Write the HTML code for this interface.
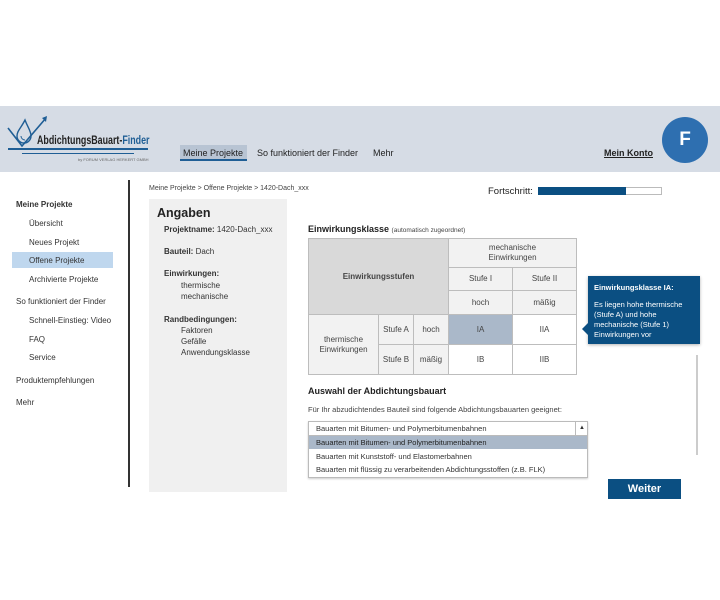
<!DOCTYPE html>
<html><head><meta charset="utf-8"><style>
*{margin:0;padding:0;box-sizing:border-box}
body{width:720px;height:600px;background:#fff;font-family:"Liberation Sans",sans-serif;color:#333;position:relative;overflow:hidden;font-size:8px}
.a{position:absolute;white-space:nowrap}
table{border-collapse:collapse;position:absolute;left:308px;top:238px}
td{border:1px solid #bdbdbd;text-align:center;font-size:8px;color:#444;line-height:10px}
</style></head><body>
<div class="a" style="left:0;top:106px;width:720px;height:66px;background:#d6dce5"></div>
<svg class="a" style="left:6px;top:114px" width="46" height="36" viewBox="0 0 46 36">
<path d="M2 14 L16 32 L40 4" fill="none" stroke="#1f5e95" stroke-width="1.6"/>
<path d="M36 4 L41 2 L40 8 Z" fill="#1f5e95"/>
<path d="M19 6 C15 14 11 17 11 22 a7 7 0 0 0 14 0 C25 17 22 14 19 6Z" fill="none" stroke="#1f5e95" stroke-width="1.4"/>
<path d="M15 22 a4 4 0 0 0 4 4" fill="none" stroke="#1f5e95" stroke-width="1"/>
</svg>
<div class="a" style="left:37px;top:133px;font-size:12px;font-weight:bold;color:#222;transform:scaleX(0.74);transform-origin:left">AbdichtungsBauart-<span style="color:#1f5e95">Finder</span></div>
<div class="a" style="left:8px;top:148px;width:140px;height:1.5px;background:#1f5e95"></div>
<div class="a" style="left:22px;top:153px;width:112px;height:1px;background:#1f5e95"></div>
<div class="a" style="left:78px;top:157px;font-size:4px;color:#666">by FORUM VERLAG HERKERT GMBH</div>
<div class="a" style="left:180px;top:145px;width:67px;height:16px;background:#b8c4d3;border-bottom:2px solid #1f5e95"></div>
<div class="a" style="left:183px;top:148px;font-size:9px;color:#222">Meine Projekte</div>
<div class="a" style="left:257px;top:148px;font-size:9px;color:#222">So funktioniert der Finder</div>
<div class="a" style="left:373px;top:148px;font-size:9px;color:#222">Mehr</div>
<div class="a" style="left:604px;top:148px;font-size:9px;font-weight:bold;color:#222;text-decoration:underline">Mein Konto</div>
<div class="a" style="left:662px;top:117px;width:46px;height:46px;border-radius:50%;background:#2e6fb0;color:#fff;font-size:19px;font-weight:bold;text-align:center;line-height:46px">F</div>

<div class="a" style="left:16px;top:200px;font-size:8px;font-weight:bold">Meine Projekte</div>
<div class="a" style="left:29px;top:219px">Übersicht</div>
<div class="a" style="left:29px;top:238px">Neues Projekt</div>
<div class="a" style="left:12px;top:252px;width:101px;height:16px;background:#bfd7ee"></div>
<div class="a" style="left:29px;top:256px">Offene Projekte</div>
<div class="a" style="left:29px;top:275px">Archivierte Projekte</div>
<div class="a" style="left:16px;top:297px">So funktioniert der Finder</div>
<div class="a" style="left:29px;top:316px">Schnell-Einstieg: Video</div>
<div class="a" style="left:29px;top:335px">FAQ</div>
<div class="a" style="left:29px;top:353px">Service</div>
<div class="a" style="left:16px;top:376px">Produktempfehlungen</div>
<div class="a" style="left:16px;top:398px">Mehr</div>
<div class="a" style="left:128px;top:180px;width:2px;height:307px;background:#333"></div>

<div class="a" style="left:149px;top:185px;font-size:7px;color:#444">Meine Projekte &gt; Offene Projekte &gt; 1420-Dach_xxx</div>
<div class="a" style="left:149px;top:199px;width:138px;height:293px;background:#f0f0f0"></div>
<div class="a" style="left:157px;top:206px;font-size:12.5px;font-weight:bold;color:#222">Angaben</div>
<div class="a" style="left:164px;top:225px"><b>Projektname:</b> 1420-Dach_xxx</div>
<div class="a" style="left:164px;top:247px"><b>Bauteil:</b> Dach</div>
<div class="a" style="left:164px;top:269px"><b>Einwirkungen:</b></div>
<div class="a" style="left:181px;top:281px">thermische</div>
<div class="a" style="left:181px;top:292px">mechanische</div>
<div class="a" style="left:164px;top:315px"><b>Randbedingungen:</b></div>
<div class="a" style="left:181px;top:326px">Faktoren</div>
<div class="a" style="left:181px;top:337px">Gefälle</div>
<div class="a" style="left:181px;top:348px">Anwendungsklasse</div>

<div class="a" style="left:488px;top:186px;font-size:9.5px;color:#222">Fortschritt:</div>
<div class="a" style="left:538px;top:187px;width:124px;height:8px;border:1px solid #bbb;background:#fff"></div>
<div class="a" style="left:538px;top:187px;width:88px;height:8px;background:#0b4f82"></div>

<div class="a" style="left:308px;top:224px;font-size:9px;font-weight:bold;color:#222">Einwirkungsklasse <span style="font-weight:normal;font-size:6.5px;color:#444">(automatisch zugeordnet)</span></div>
<table>
<tr style="height:29px"><td colspan="3" rowspan="3" style="width:140px;background:#d9d9d9;font-weight:bold">Einwirkungsstufen</td><td colspan="2" style="background:#f2f2f2">mechanische<br>Einwirkungen</td></tr>
<tr style="height:23px"><td style="width:64px;background:#f2f2f2">Stufe I</td><td style="width:64px;background:#f2f2f2">Stufe II</td></tr>
<tr style="height:24px"><td style="background:#f2f2f2">hoch</td><td style="background:#f2f2f2">mäßig</td></tr>
<tr style="height:30px"><td rowspan="2" style="width:70px;background:#f2f2f2">thermische<br>Einwirkungen</td><td style="width:35px;background:#f2f2f2">Stufe A</td><td style="width:35px;background:#f2f2f2">hoch</td><td style="background:#aab8c9">IA</td><td>IIA</td></tr>
<tr style="height:30px"><td style="background:#f2f2f2">Stufe B</td><td style="background:#f2f2f2">mäßig</td><td>IB</td><td>IIB</td></tr>
</table>
<div class="a" style="left:588px;top:276px;width:112px;height:68px;background:#0b4f82;box-shadow:0 1px 3px rgba(0,0,0,.3)"></div>
<div class="a" style="left:582px;top:323px;width:0;height:0;border-top:6px solid transparent;border-bottom:6px solid transparent;border-right:6px solid #0b4f82"></div>
<div class="a" style="left:594px;top:283px;color:#fff;font-weight:bold;font-size:7.5px">Einwirkungsklasse IA:</div>
<div class="a" style="left:594px;top:300px;color:#fff;font-size:7.5px;line-height:10px">Es liegen hohe thermische<br>(Stufe A) und hohe<br>mechanische (Stufe 1)<br>Einwirkungen vor</div>
<div class="a" style="left:696px;top:355px;width:2px;height:100px;background:#ccc"></div>

<div class="a" style="left:308px;top:386px;font-size:9px;font-weight:bold;color:#222">Auswahl der Abdichtungsbauart</div>
<div class="a" style="left:308px;top:405px;font-size:7.5px;color:#444">Für Ihr abzudichtendes Bauteil sind folgende Abdichtungsbauarten geeignet:</div>
<div class="a" style="left:308px;top:421px;width:280px;height:57px;border:1px solid #bbb;background:#fff;box-shadow:0 1px 2px rgba(0,0,0,.2)"></div>
<div class="a" style="left:308px;top:435px;width:280px;height:1px;background:#bbb"></div>
<div class="a" style="left:575px;top:421px;width:1px;height:14px;background:#bbb"></div>
<div class="a" style="left:579px;top:425px;font-size:6px">▲</div>
<div class="a" style="left:316px;top:424px;font-size:7.5px">Bauarten mit Bitumen- und Polymerbitumenbahnen</div>
<div class="a" style="left:309px;top:436px;width:278px;height:13px;background:#aab8c9"></div>
<div class="a" style="left:316px;top:438px;font-size:7.5px;color:#222">Bauarten mit Bitumen- und Polymerbitumenbahnen</div>
<div class="a" style="left:316px;top:452px;font-size:7.5px">Bauarten mit Kunststoff- und Elastomerbahnen</div>
<div class="a" style="left:316px;top:465px;font-size:7.5px">Bauarten mit flüssig zu verarbeitenden Abdichtungsstoffen (z.B. FLK)</div>
<div class="a" style="left:608px;top:479px;width:73px;height:20px;background:#0b4f82;color:#fff;font-weight:bold;font-size:11px;text-align:center;line-height:20px">Weiter</div>
</body></html>
